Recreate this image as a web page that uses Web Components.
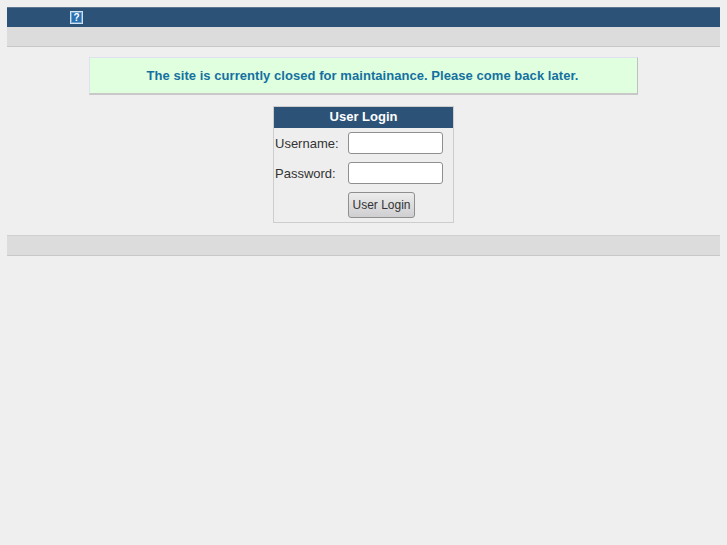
<!DOCTYPE html>
<html>
<head>
<meta charset="utf-8">
<title>User Login</title>
<style>
    html, body { margin: 0; background: #efefef; }
    body { padding: 7px 7px 0 7px; font-family: "Liberation Sans", Arial, sans-serif; }
</style>
</head>
<body>
<site-header></site-header>
<gray-bar></gray-bar>
<notice-box>The site is currently closed for maintainance. Please come back later.</notice-box>
<login-box></login-box>
<gray-bar class="bottom"></gray-bar>

<script>
class SiteHeader extends HTMLElement {
    constructor() {
        super();
        this.attachShadow({ mode: 'open' });
        this.shadowRoot.innerHTML = `
            <style>
                :host {
                    display: flex;
                    align-items: center;
                    box-sizing: border-box;
                    height: 20px;
                    padding-left: 63px;
                    background: #2c5278;
                    border-top: 1px solid #5a7690;
                }
                .help {
                    box-sizing: border-box;
                    width: 13px;
                    height: 13px;
                    border: 1px solid #cfe2f4;
                    box-shadow: inset 0 0 0 1px #6f9fcb;
                    background: #2a6fb0;
                    color: #fff;
                    font: bold 10px/11px "Liberation Sans", sans-serif;
                    text-align: center;
                }
            </style>
            <div class="help">?</div>
        `;
    }
}
customElements.define('site-header', SiteHeader);

class GrayBar extends HTMLElement {
    constructor() {
        super();
        this.attachShadow({ mode: 'open' });
        this.shadowRoot.innerHTML = `
            <style>
                :host {
                    display: block;
                    box-sizing: border-box;
                    height: 20px;
                    background: #dcdcdc;
                    border-bottom: 1px solid #c8c8c8;
                }
                :host(.bottom) {
                    height: 21px;
                    border-top: 1px solid #cfcfcf;
                }
            </style>
        `;
    }
}
customElements.define('gray-bar', GrayBar);

class NoticeBox extends HTMLElement {
    constructor() {
        super();
        this.attachShadow({ mode: 'open' });
        this.shadowRoot.innerHTML = `
            <style>
                :host {
                    display: flex;
                    justify-content: center;
                    align-items: center;
                    box-sizing: border-box;
                    width: 549px;
                    height: 38px;
                    margin: 10px 0 11px 82px;
                    padding-right: 2px;
                    background: #dfffdf;
                    border: 1px solid #e0e0f0;
                    border-right: 1px solid #c0c0c0;
                    border-bottom: 2px solid #c8c8c8;
                    color: #14709f;
                    font-size: 13px;
                    font-weight: bold;
                    letter-spacing: 0.05px;
                }
            </style>
            <slot></slot>
        `;
    }
}
customElements.define('notice-box', NoticeBox);

class LoginBox extends HTMLElement {
    constructor() {
        super();
        this.attachShadow({ mode: 'open' });
        this.shadowRoot.innerHTML = `
            <style>
                :host {
                    display: block;
                    box-sizing: border-box;
                    width: 181px;
                    height: 117px;
                    margin: 0 0 12px 266px;
                    border: 1px solid #cdcdcd;
                    background: #eeeeee;
                    color: #333;
                    font-size: 13px;
                }
                .title {
                    height: 21px;
                    background: #2c5278;
                    color: #fff;
                    font-weight: bold;
                    font-size: 13px;
                    line-height: 19px;
                    text-align: center;
                }
                .form {
                    display: grid;
                    grid-template-columns: 73px 95px;
                    grid-auto-rows: 22px;
                    row-gap: 8px;
                    padding: 4px 0 0 1px;
                    align-items: center;
                }
                input {
                    box-sizing: border-box;
                    width: 95px;
                    height: 22px;
                    margin: 0;
                    background: #fff;
                    border: 1px solid #8f8f8f;
                    border-radius: 3px;
                }
                button {
                    grid-column: 2;
                    justify-self: start;
                    align-self: start;
                    box-sizing: border-box;
                    width: 67px;
                    height: 26px;
                    margin: 0;
                    padding: 0;
                    border: 1px solid #8f8f8f;
                    border-radius: 3px;
                    background: linear-gradient(#ececec, #cfcfd2);
                    color: #333;
                    font: 12px "Liberation Sans", sans-serif;
                }
            </style>
            <div class="title">User Login</div>
            <div class="form">
                <label>Username:</label><input type="text">
                <label>Password:</label><input type="password">
                <button>User Login</button>
            </div>
        `;
    }
}
customElements.define('login-box', LoginBox);
</script>
</body>
</html>
